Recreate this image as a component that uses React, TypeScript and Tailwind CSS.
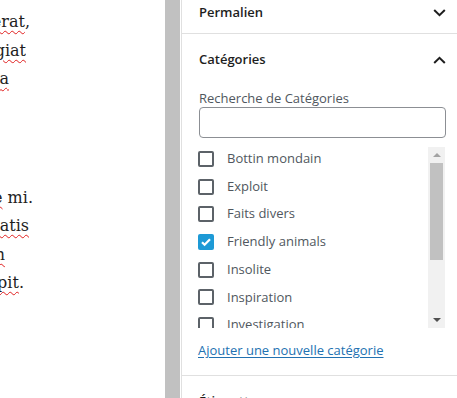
import React from 'react';

type Line = { w: string; before: string; wavy: string; after: string };

const topLines: Line[] = [
  { w: 'w-[30px]', before: 'Donec ', wavy: 'placerat', after: ',' },
  { w: 'w-[26px]', before: 'quis ', wavy: 'feugiat', after: '' },
  { w: 'w-[9px]', before: 'et ', wavy: 'viverra', after: '' },
];

const bottomLines: Line[] = [
  { w: 'w-[33px]', before: 'sed ', wavy: 'neque', after: ' mi.' },
  { w: 'w-[29px]', before: 'ut ', wavy: 'venenatis', after: '' },
  { w: 'w-[5px]', before: 'at ', wavy: 'non', after: '' },
  { w: 'w-[24px]', before: 'nisl ', wavy: 'suscipit', after: '.' },
];

const categories = [
  { name: 'Bottin mondain', checked: false },
  { name: 'Exploit', checked: false },
  { name: 'Faits divers', checked: false },
  { name: 'Friendly animals', checked: true },
  { name: 'Insolite', checked: false },
  { name: 'Inspiration', checked: false },
  { name: 'Investigation', checked: false },
];

function EditorLine({ line }: { line: Line }) {
  return (
    <div className={`${line.w} h-[28.5px] flex justify-end overflow-hidden whitespace-nowrap`}>
      <span className="shrink-0">
        {line.before}
        <span className="underline decoration-wavy decoration-[#e02020] decoration-1 underline-offset-[3px]">
          {line.wavy}
        </span>
        {line.after}
      </span>
    </div>
  );
}

function Chevron({ up }: { up?: boolean }) {
  return (
    <div className="w-[24px] h-[24px] flex items-center justify-center">
      <svg width="13" height="8" viewBox="0 0 13 8" fill="none">
        <path
          d={up ? 'M1.2 7L6.5 1.8 11.8 7' : 'M1.2 1L6.5 6.2 11.8 1'}
          stroke="#1e1e1e"
          strokeWidth="2"
        />
      </svg>
    </div>
  );
}

function Checkbox({ checked }: { checked: boolean }) {
  if (checked) {
    return (
      <div className="w-[16px] h-[16px] rounded-[2px] bg-[#1d9ad6] flex items-center justify-center shrink-0">
        <svg width="12" height="12" viewBox="0 0 12 12" fill="none">
          <path d="M2 6.2l2.6 2.6L10 3.2" stroke="white" strokeWidth="2.2" />
        </svg>
      </div>
    );
  }
  return <div className="w-[16px] h-[16px] rounded-[2px] border-2 border-[#5c6268] bg-white shrink-0" />;
}

export default function App() {
  return (
    <div className="w-[457px] h-[398px] overflow-hidden bg-white flex font-['Open_Sans',sans-serif]">
      {/* editor canvas */}
      <div className="w-[165px] shrink-0 pt-[8px] text-[16px] leading-[28.5px] text-[#1e1e1e] font-['DejaVu_Serif','Liberation_Serif',serif]">
        <div>
          {topLines.map((l) => (
            <EditorLine key={l.wavy} line={l} />
          ))}
        </div>
        <div className="mt-[90px]">
          {bottomLines.map((l) => (
            <EditorLine key={l.wavy} line={l} />
          ))}
        </div>
      </div>
      <div className="w-[15px] shrink-0 bg-[#c1c1c1] mr-[1px]" />

      {/* sidebar */}
      <div className="flex-1 border-l border-[#e0e0e0] flex flex-col">
        <div className="h-[34px] pb-[8px] pl-[17px] pr-[6px] flex items-center justify-between border-b border-[#e0e0e0] shrink-0">
          <span className="text-[13px] font-semibold text-[#1e1e1e]">Permalien</span>
          <Chevron />
        </div>

        <div className="border-b border-[#e0e0e0] shrink-0">
          <div className="h-[52px] pl-[17px] pr-[6px] flex items-center justify-between">
            <span className="text-[13px] font-semibold text-[#1e1e1e]">Catégories</span>
            <Chevron up />
          </div>
          <div className="pl-[17px] pr-[11px] pb-[16px]">
            <div className="mt-[3px] text-[13px] leading-[18px] text-[#50575e]">Recherche de Catégories</div>
            <div className="h-[31px] border border-[#8c8f94] rounded-[4px] bg-white" />

            <div className="mt-[9px] h-[181px] flex -ml-[1px] mr-[1px]">
              <div className="flex-1 overflow-hidden">
                <div className="-mt-[2px] flex flex-col">
                  {categories.map((c) => (
                    <div key={c.name} className="h-[27.7px] flex items-center gap-[13px] shrink-0">
                      <Checkbox checked={c.checked} />
                      <span className="text-[13px] text-[#50575e] whitespace-nowrap">{c.name}</span>
                    </div>
                  ))}
                </div>
              </div>
              <div className="w-[17px] bg-[#f1f1f1] flex flex-col items-center">
                <div className="h-[16px] flex items-center justify-center">
                  <div className="w-0 h-0 border-l-[4px] border-r-[4px] border-b-[4px] border-l-transparent border-r-transparent border-b-[#a3a3a3]" />
                </div>
                <div className="w-[13px] h-[97px] bg-[#c1c1c1]" />
                <div className="flex-1" />
                <div className="h-[16px] flex items-center justify-center">
                  <div className="w-0 h-0 border-l-[4px] border-r-[4px] border-t-[4px] border-l-transparent border-r-transparent border-t-[#505050]" />
                </div>
              </div>
            </div>

            <div className="mt-[13px] text-[13px] leading-[18px]">
              <span className="text-[#2271b1] underline underline-offset-2 -ml-[1px]">Ajouter une nouvelle catégorie</span>
            </div>
          </div>
        </div>

        <div className="h-[52px] pl-[17px] pr-[6px] flex items-center justify-between shrink-0">
          <span className="text-[13px] font-semibold text-[#1e1e1e]">Étiquettes</span>
          <Chevron />
        </div>
      </div>
    </div>
  );
}
